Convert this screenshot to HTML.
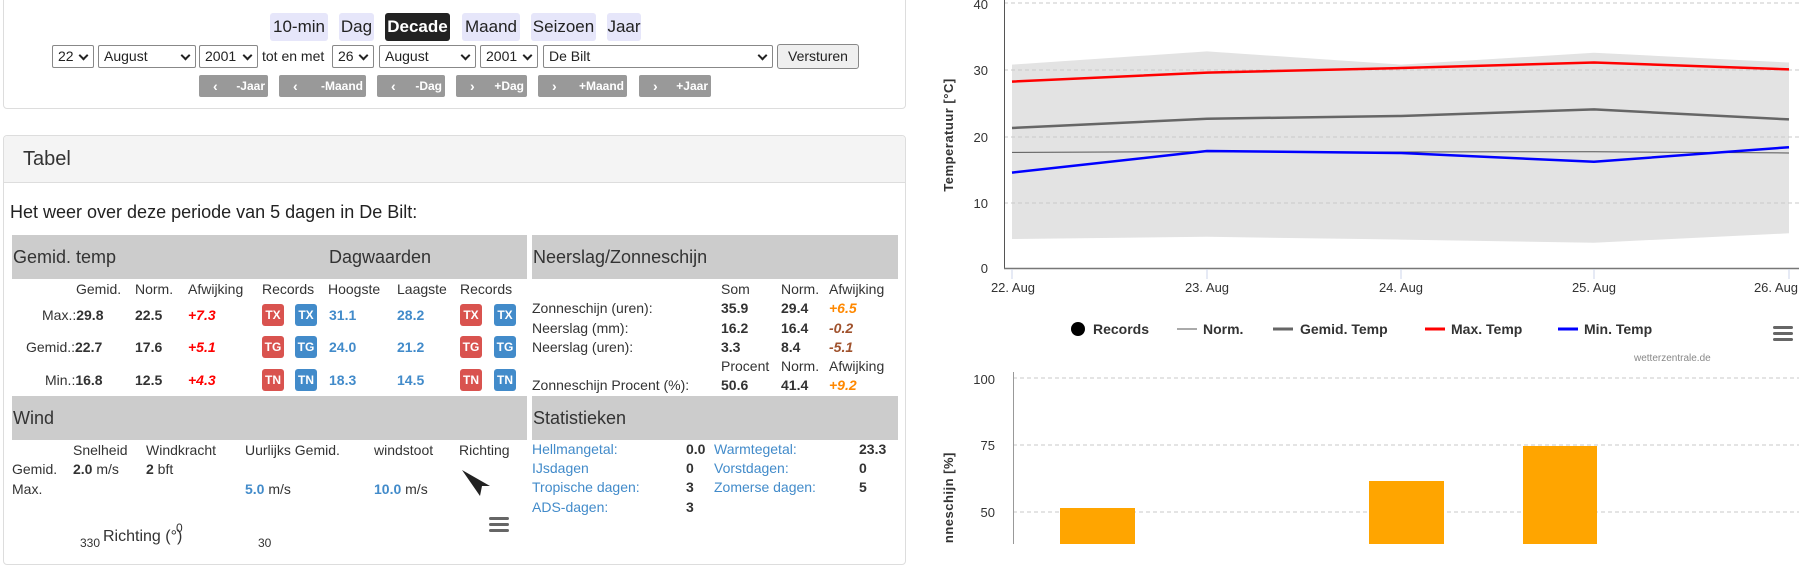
<!DOCTYPE html>
<html><head><meta charset="utf-8">
<style>
*{box-sizing:border-box;margin:0;padding:0}
body{width:1799px;height:544px;overflow:hidden;background:#fff;font-family:"Liberation Sans",sans-serif;color:#333;position:relative;font-size:13px}
.a{position:absolute;white-space:nowrap}
.panel{position:absolute;border:1px solid #ddd;border-radius:4px;background:#fff}
.nav{position:absolute;top:13px;height:28px;background:#e6e6fa;border-radius:3px;font-size:17px;line-height:28px;text-align:center;color:#222}
.sel{position:absolute;top:45px;height:23px;border:1px solid #888;border-radius:2px;font-size:14px;line-height:21px;padding-left:5px;background:#fff;color:#222}
.sel:after{content:"";position:absolute;right:6px;top:6px;width:5px;height:5px;border-right:2px solid #222;border-bottom:2px solid #222;transform:rotate(45deg)}
.btn{position:absolute;top:75px;height:22px;background:#999;border-radius:2px;color:#fff;font-size:12px;font-weight:bold;line-height:22px}
.btn span{position:absolute;left:14px;font-size:14px}
.btn b{position:absolute;right:3px}
.gh{position:absolute;background:#ccc;font-size:18px;color:#333;line-height:44px;padding-left:1px}
.badge{position:absolute;width:22px;height:22px;border-radius:3px;color:#fff;font-weight:bold;font-size:12px;line-height:22px;text-align:center}
.r{background:#d9534f}.b{background:#428bca}
.bl{color:#428bca}.bo{font-weight:bold}
.red{color:#f00;font-style:italic;font-weight:bold}
.or{color:#f80;font-style:italic;font-weight:bold}
.br{color:#a0522d;font-style:italic;font-weight:bold}
</style></head><body>

<div class="panel" style="left:3px;top:-5px;width:903px;height:114px"></div>
<div class="nav" style="left:270px;width:58px">10-min</div>
<div class="nav" style="left:339px;width:35px">Dag</div>
<div class="nav" style="left:385px;width:65px;background:#222;color:#fff;font-weight:bold">Decade</div>
<div class="nav" style="left:462px;width:58px">Maand</div>
<div class="nav" style="left:531px;width:65px">Seizoen</div>
<div class="nav" style="left:607px;width:34px">Jaar</div>

<div class="sel" style="left:52px;width:42px">22</div>
<div class="sel" style="left:98px;width:98px">August</div>
<div class="sel" style="left:199px;width:59px">2001</div>
<div class="a" style="left:262px;top:46px;font-size:14px;line-height:21px;color:#222">tot en met</div>
<div class="sel" style="left:332px;width:42px">26</div>
<div class="sel" style="left:379px;width:97px">August</div>
<div class="sel" style="left:480px;width:58px">2001</div>
<div class="sel" style="left:543px;width:230px">De Bilt</div>
<div class="a" style="left:777px;top:44px;width:82px;height:25px;border:1px solid #888;border-radius:3px;background:#efefef;font-size:14px;line-height:23px;text-align:center;color:#222">Versturen</div>

<div class="btn" style="left:199px;width:69px"><span>‹</span><b>-Jaar</b></div>
<div class="btn" style="left:279px;width:87px"><span>‹</span><b>-Maand</b></div>
<div class="btn" style="left:377px;width:68px"><span>‹</span><b>-Dag</b></div>
<div class="btn" style="left:456px;width:71px"><span>›</span><b>+Dag</b></div>
<div class="btn" style="left:538px;width:89px"><span>›</span><b>+Maand</b></div>
<div class="btn" style="left:639px;width:72px"><span>›</span><b>+Jaar</b></div>

<div class="panel" style="left:3px;top:135px;width:903px;height:430px"></div>
<div class="a" style="left:4px;top:136px;width:901px;height:47px;background:#f4f4f4;border-bottom:1px solid #ddd;border-radius:4px 4px 0 0"></div>
<div class="a" style="left:23px;top:148px;font-size:20px;color:#333">Tabel</div>
<div class="a" style="left:10px;top:202px;font-size:18px;color:#222">Het weer over deze periode van 5 dagen in De Bilt:</div>

<div class="gh" style="left:12px;top:235px;width:515px">Gemid. temp<span style="position:absolute;left:317px">Dagwaarden</span></div>
<div class="gh" style="left:532px;top:235px;width:366px">Neerslag/Zonneschijn</div>

<div class="a" style="left:76px;top:281px;font-size:14px">Gemid.</div>
<div class="a" style="left:135px;top:281px;font-size:14px">Norm.</div>
<div class="a" style="left:188px;top:281px;font-size:14px">Afwijking</div>
<div class="a" style="left:262px;top:281px;font-size:14px">Records</div>
<div class="a" style="left:328px;top:281px;font-size:14px">Hoogste</div>
<div class="a" style="left:397px;top:281px;font-size:14px">Laagste</div>
<div class="a" style="left:460px;top:281px;font-size:14px">Records</div>

<div class="a" style="left:42px;top:307px;font-size:14px">Max.:<b>29.8</b></div>
<div class="a" style="left:26px;top:339px;font-size:14px">Gemid.:<b>22.7</b></div>
<div class="a" style="left:45px;top:372px;font-size:14px">Min.:<b>16.8</b></div>
<div class="a bo" style="left:135px;top:307px;font-size:14px">22.5</div>
<div class="a bo" style="left:135px;top:339px;font-size:14px">17.6</div>
<div class="a bo" style="left:135px;top:372px;font-size:14px">12.5</div>
<div class="a red" style="left:188px;top:307px;font-size:14px">+7.3</div>
<div class="a red" style="left:188px;top:339px;font-size:14px">+5.1</div>
<div class="a red" style="left:188px;top:372px;font-size:14px">+4.3</div>

<div class="badge r" style="left:262px;top:304px">TX</div><div class="badge b" style="left:295px;top:304px">TX</div>
<div class="badge r" style="left:262px;top:336px">TG</div><div class="badge b" style="left:295px;top:336px">TG</div>
<div class="badge r" style="left:262px;top:369px">TN</div><div class="badge b" style="left:295px;top:369px">TN</div>
<div class="badge r" style="left:460px;top:304px">TX</div><div class="badge b" style="left:494px;top:304px">TX</div>
<div class="badge r" style="left:460px;top:336px">TG</div><div class="badge b" style="left:494px;top:336px">TG</div>
<div class="badge r" style="left:460px;top:369px">TN</div><div class="badge b" style="left:494px;top:369px">TN</div>
<div class="a bl bo" style="left:329px;top:307px;font-size:14px">31.1</div>
<div class="a bl bo" style="left:329px;top:339px;font-size:14px">24.0</div>
<div class="a bl bo" style="left:329px;top:372px;font-size:14px">18.3</div>
<div class="a bl bo" style="left:397px;top:307px;font-size:14px">28.2</div>
<div class="a bl bo" style="left:397px;top:339px;font-size:14px">21.2</div>
<div class="a bl bo" style="left:397px;top:372px;font-size:14px">14.5</div>

<div class="a" style="left:721px;top:281px;font-size:14px">Som</div>
<div class="a" style="left:781px;top:281px;font-size:14px">Norm.</div>
<div class="a" style="left:829px;top:281px;font-size:14px">Afwijking</div>
<div class="a" style="left:532px;top:300px;font-size:14px">Zonneschijn (uren):</div>
<div class="a" style="left:532px;top:320px;font-size:14px">Neerslag (mm):</div>
<div class="a" style="left:532px;top:339px;font-size:14px">Neerslag (uren):</div>
<div class="a" style="left:721px;top:358px;font-size:14px">Procent</div>
<div class="a" style="left:781px;top:358px;font-size:14px">Norm.</div>
<div class="a" style="left:829px;top:358px;font-size:14px">Afwijking</div>
<div class="a" style="left:532px;top:377px;font-size:14px">Zonneschijn Procent (%):</div>
<div class="a bo" style="left:721px;top:300px;font-size:14px">35.9</div><div class="a bo" style="left:781px;top:300px;font-size:14px">29.4</div><div class="a or" style="left:829px;top:300px;font-size:14px">+6.5</div>
<div class="a bo" style="left:721px;top:320px;font-size:14px">16.2</div><div class="a bo" style="left:781px;top:320px;font-size:14px">16.4</div><div class="a br" style="left:829px;top:320px;font-size:14px">-0.2</div>
<div class="a bo" style="left:721px;top:339px;font-size:14px">3.3</div><div class="a bo" style="left:781px;top:339px;font-size:14px">8.4</div><div class="a br" style="left:829px;top:339px;font-size:14px">-5.1</div>
<div class="a bo" style="left:721px;top:377px;font-size:14px">50.6</div><div class="a bo" style="left:781px;top:377px;font-size:14px">41.4</div><div class="a or" style="left:829px;top:377px;font-size:14px">+9.2</div>

<div class="gh" style="left:12px;top:396px;width:515px">Wind</div>
<div class="gh" style="left:532px;top:396px;width:366px">Statistieken</div>

<div class="a" style="left:73px;top:442px;font-size:14px">Snelheid</div>
<div class="a" style="left:146px;top:442px;font-size:14px">Windkracht</div>
<div class="a" style="left:245px;top:442px;font-size:14px">Uurlijks Gemid.</div>
<div class="a" style="left:374px;top:442px;font-size:14px">windstoot</div>
<div class="a" style="left:459px;top:442px;font-size:14px">Richting</div>
<div class="a" style="left:12px;top:461px;font-size:14px">Gemid.</div>
<div class="a" style="left:73px;top:461px;font-size:14px"><b>2.0</b> m/s</div>
<div class="a" style="left:146px;top:461px;font-size:14px"><b>2</b> bft</div>
<div class="a" style="left:12px;top:481px;font-size:14px">Max.</div>
<div class="a" style="left:245px;top:481px;font-size:14px"><b class="bl">5.0</b> m/s</div>
<div class="a" style="left:374px;top:481px;font-size:14px"><b class="bl">10.0</b> m/s</div>
<svg class="a" style="left:460px;top:468px" width="34" height="30"><path d="M2 2 L30 18 L22 18 L20 28 Z" fill="#222"/></svg>

<div class="a bl" style="left:532px;top:441px;font-size:14px">Hellmangetal:</div><div class="a bo" style="left:686px;top:441px;font-size:14px">0.0</div>
<div class="a bl" style="left:532px;top:460px;font-size:14px">IJsdagen</div><div class="a bo" style="left:686px;top:460px;font-size:14px">0</div>
<div class="a bl" style="left:532px;top:479px;font-size:14px">Tropische dagen:</div><div class="a bo" style="left:686px;top:479px;font-size:14px">3</div>
<div class="a bl" style="left:532px;top:499px;font-size:14px">ADS-dagen:</div><div class="a bo" style="left:686px;top:499px;font-size:14px">3</div>
<div class="a bl" style="left:714px;top:441px;font-size:14px">Warmtegetal:</div><div class="a bo" style="left:859px;top:441px;font-size:14px">23.3</div>
<div class="a bl" style="left:714px;top:460px;font-size:14px">Vorstdagen:</div><div class="a bo" style="left:859px;top:460px;font-size:14px">0</div>
<div class="a bl" style="left:714px;top:479px;font-size:14px">Zomerse dagen:</div><div class="a bo" style="left:859px;top:479px;font-size:14px">5</div>

<svg class="a" style="left:489px;top:516px" width="20" height="18"><rect x="0" y="1" width="20" height="3" rx="1.5" fill="#666"/><rect x="0" y="7" width="20" height="3" rx="1.5" fill="#666"/><rect x="0" y="13" width="20" height="3" rx="1.5" fill="#666"/></svg>
<div class="a" style="left:176px;top:521px;font-size:12px;color:#333">0</div>
<div class="a" style="left:103px;top:528px;font-size:16px;color:#333">Richting (°)</div>
<div class="a" style="left:80px;top:536px;font-size:12px;color:#333">330</div>
<div class="a" style="left:258px;top:536px;font-size:12px;color:#333">30</div>

<svg class="a" style="left:906px;top:0" width="893" height="544" font-family="Liberation Sans, sans-serif">
<g transform="translate(-906,0)">
<polygon points="1012,64.6 1207,51.4 1401,64.6 1594,52.8 1789,62.5 1789,233.3 1594,242.7 1401,239.6 1207,236.8 1012,239" fill="#e3e3e3"/>
<g stroke="#c8c8c8" stroke-dasharray="4,3" stroke-width="1">
<line x1="1004" y1="3" x2="1799" y2="3"/><line x1="1004" y1="70" x2="1799" y2="70"/><line x1="1004" y1="137" x2="1799" y2="137"/><line x1="1004" y1="203" x2="1799" y2="203"/>
<line x1="1013" y1="378" x2="1799" y2="378"/><line x1="1013" y1="445" x2="1799" y2="445"/><line x1="1013" y1="512" x2="1799" y2="512"/>
</g>
<line x1="1004.5" y1="0" x2="1004.5" y2="269" stroke="#555"/>
<line x1="1004" y1="268.5" x2="1799" y2="268.5" stroke="#777" stroke-width="1.5"/>
<g stroke="#ccd6eb"><line x1="1012" y1="269" x2="1012" y2="279"/><line x1="1207" y1="269" x2="1207" y2="279"/><line x1="1401" y1="269" x2="1401" y2="279"/><line x1="1594" y1="269" x2="1594" y2="279"/><line x1="1789" y1="269" x2="1789" y2="279"/></g>
<polyline points="1012,152.4 1207,151.7 1401,152 1594,151.7 1789,153" fill="none" stroke="#555" stroke-width="1"/>
<polyline points="1012,128 1207,118.7 1401,116 1594,109.4 1789,119.4" fill="none" stroke="#666" stroke-width="2.5"/>
<polyline points="1012,81.6 1207,72.6 1401,68 1594,62.5 1789,69.4" fill="none" stroke="#f00" stroke-width="2.5"/>
<polyline points="1012,172.6 1207,151 1401,153 1594,161.8 1789,147.2" fill="none" stroke="#00f" stroke-width="2.5"/>
<g font-size="13" fill="#333" text-anchor="end"><text x="988" y="9">40</text><text x="988" y="75">30</text><text x="988" y="142">20</text><text x="988" y="208">10</text><text x="988" y="273">0</text></g>
<g font-size="13" fill="#333" text-anchor="middle"><text x="1013" y="292">22. Aug</text><text x="1207" y="292">23. Aug</text><text x="1401" y="292">24. Aug</text><text x="1594" y="292">25. Aug</text><text x="1776" y="292">26. Aug</text></g>
<text transform="translate(953,135) rotate(-90)" text-anchor="middle" font-size="13" font-weight="bold" fill="#333" letter-spacing="0.5">Temperatuur [°C]</text>
<g font-size="14" font-weight="bold" fill="#333">
<circle cx="1078" cy="329" r="7" fill="#000"/><text x="1093" y="334">Records</text>
<line x1="1177" y1="329" x2="1197" y2="329" stroke="#555" stroke-width="1"/><text x="1203" y="334">Norm.</text>
<line x1="1273" y1="329" x2="1293" y2="329" stroke="#666" stroke-width="3"/><text x="1300" y="334">Gemid. Temp</text>
<line x1="1425" y1="329" x2="1445" y2="329" stroke="#f00" stroke-width="3"/><text x="1451" y="334">Max. Temp</text>
<line x1="1558" y1="329" x2="1578" y2="329" stroke="#00f" stroke-width="3"/><text x="1584" y="334">Min. Temp</text>
</g>
<rect x="1773" y="326" width="20" height="3" rx="1.5" fill="#666"/><rect x="1773" y="332" width="20" height="3" rx="1.5" fill="#666"/><rect x="1773" y="338" width="20" height="3" rx="1.5" fill="#666"/>
<text x="1634" y="361" font-size="10" fill="#888">wetterzentrale.de</text>
<line x1="1013.5" y1="372" x2="1013.5" y2="544" stroke="#999"/>
<rect x="1060" y="508" width="75" height="40" fill="#ffa500"/>
<rect x="1369" y="481" width="75" height="70" fill="#ffa500"/>
<rect x="1523" y="446" width="74" height="100" fill="#ffa500"/>
<g font-size="13" fill="#333" text-anchor="end"><text x="995" y="384">100</text><text x="995" y="450">75</text><text x="995" y="517">50</text></g>
<text transform="translate(953,560) rotate(-90)" font-size="13" font-weight="bold" fill="#333" letter-spacing="0.5">Zonneschijn [%]</text>
</g></svg>
</body></html>
